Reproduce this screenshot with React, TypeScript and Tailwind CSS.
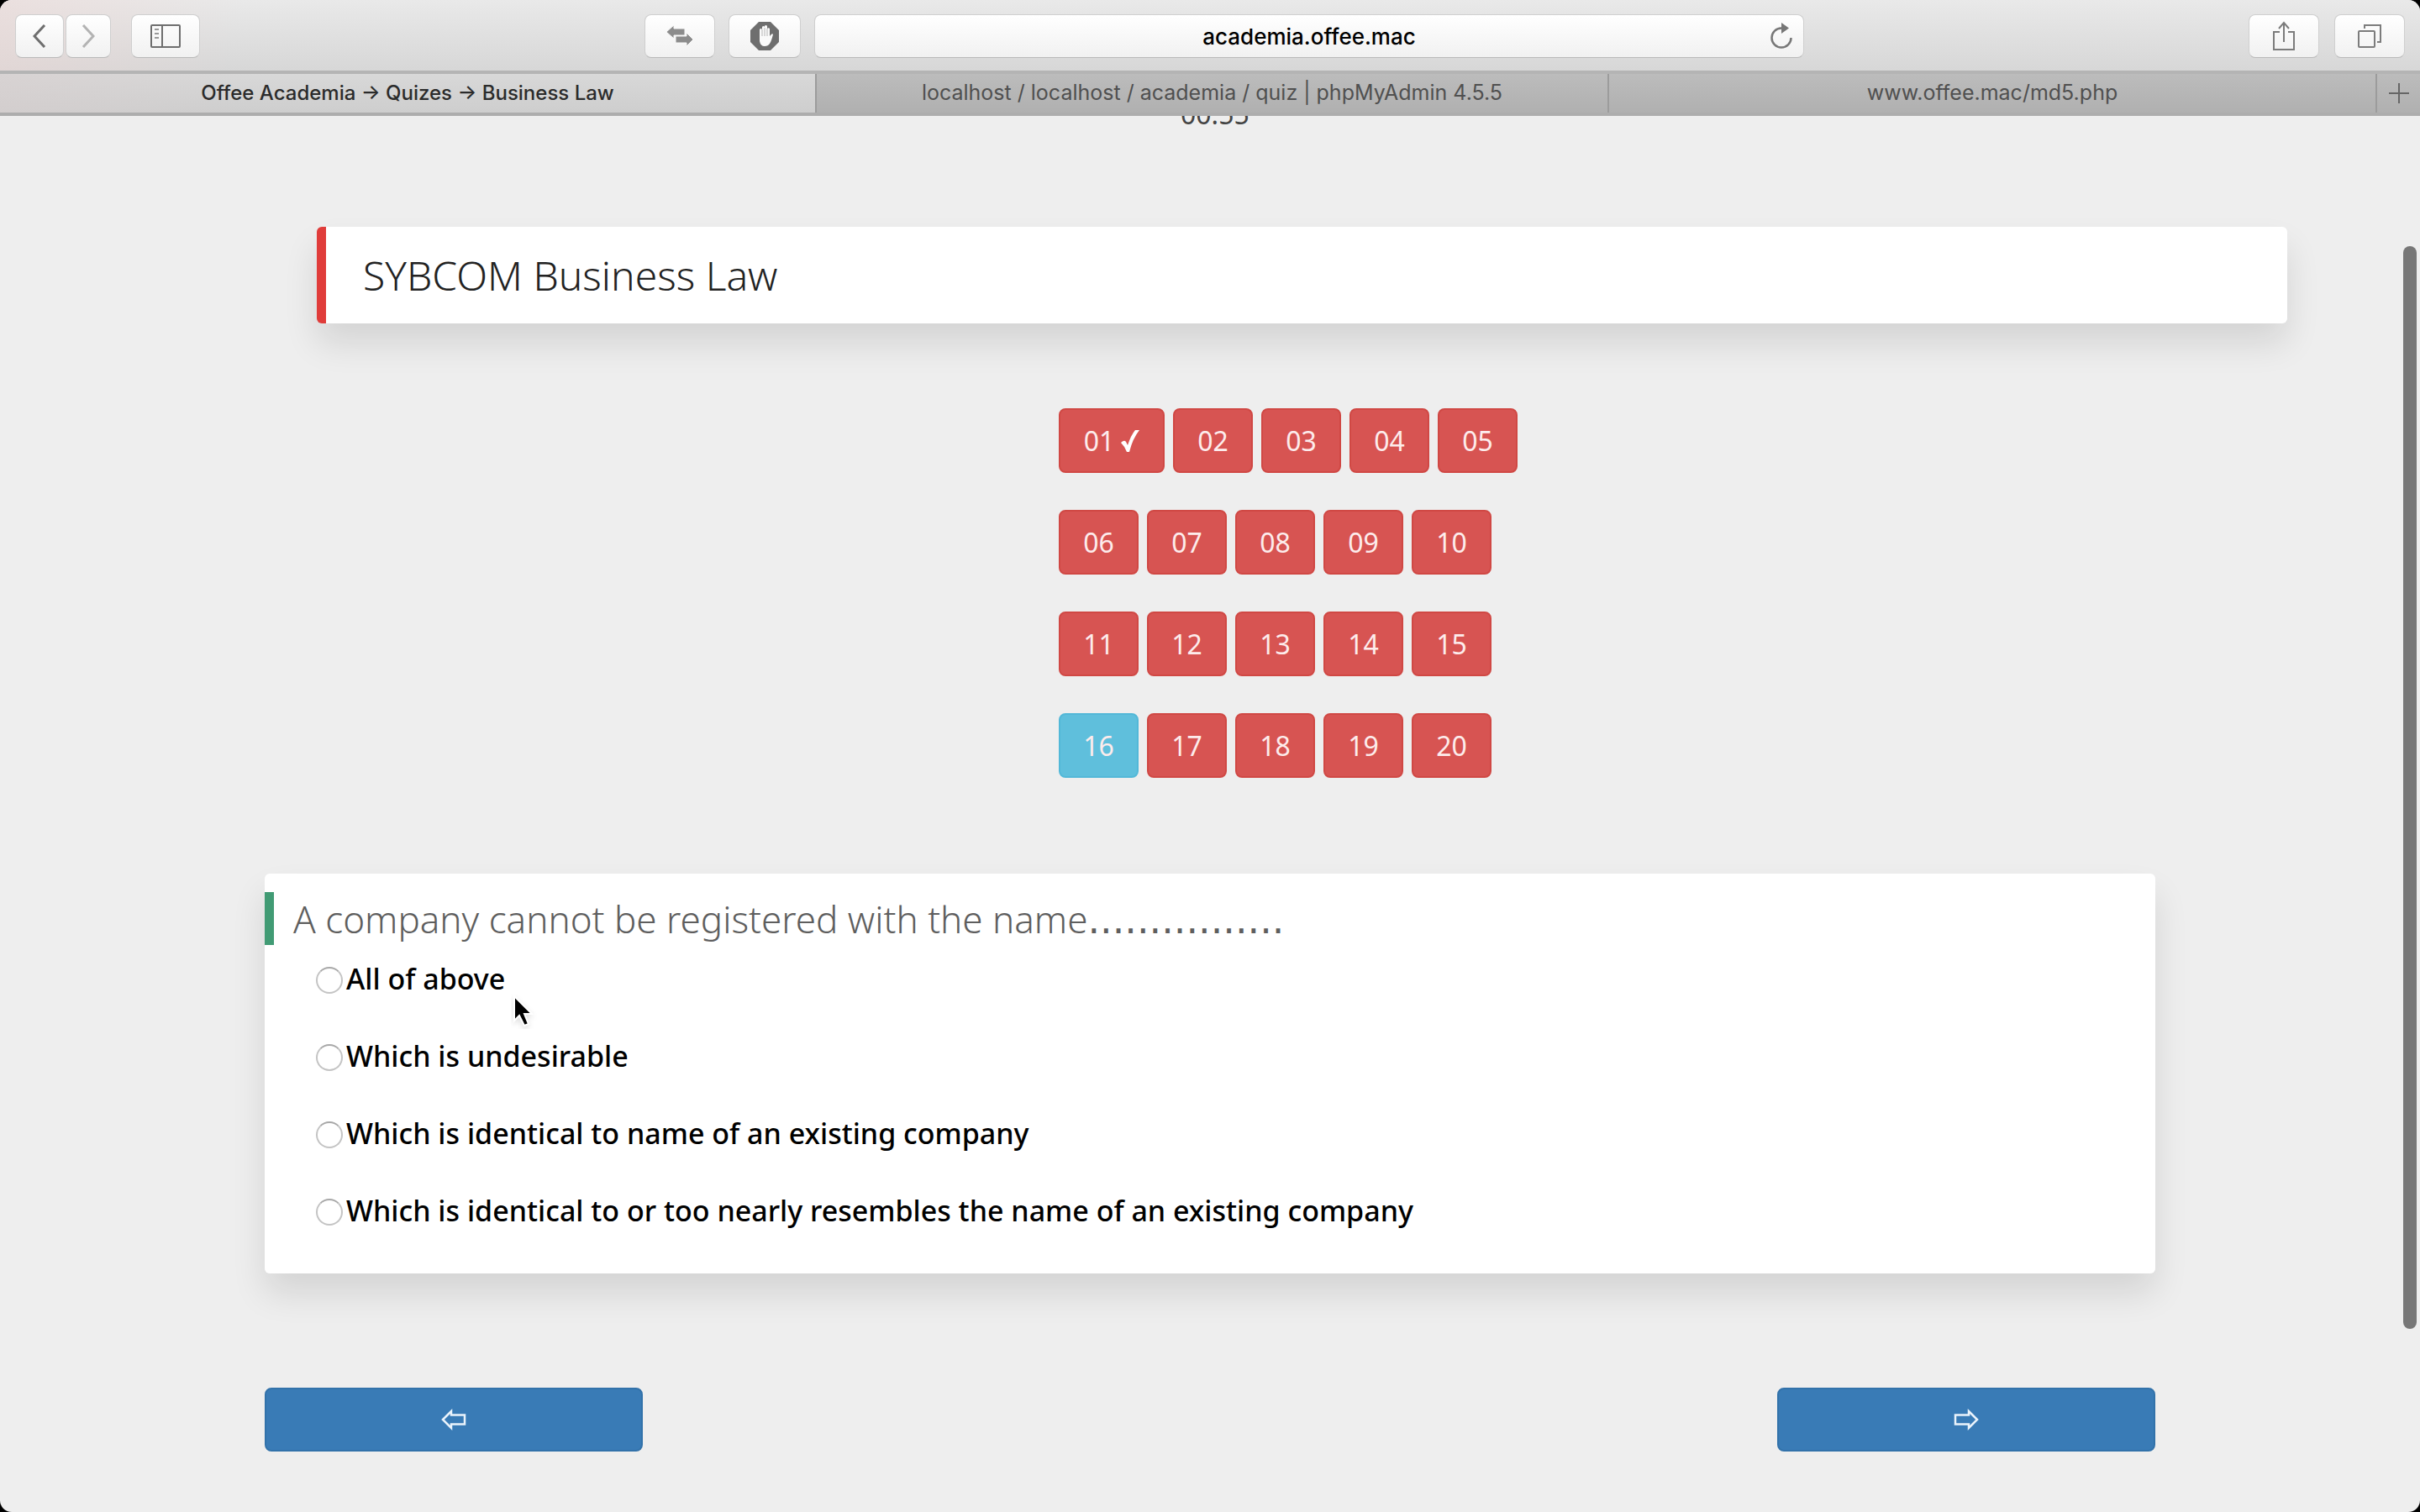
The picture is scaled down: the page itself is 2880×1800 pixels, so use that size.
import React from "react";

const chromeButton =
  "flex h-[52px] items-center justify-center rounded-lg border border-[#cfcfcf] border-b-[#b9b9b9] bg-linear-to-b from-white to-[#f1f1f1] text-[#6e6e6e]";

function BackIcon() {
  return (
    <svg width="16" height="28" viewBox="0 0 16 28" fill="none" stroke="currentColor" strokeWidth="3">
      <path d="M14 1 2 14l12 13" />
    </svg>
  );
}

function ForwardIcon() {
  return (
    <svg width="16" height="28" viewBox="0 0 16 28" fill="none" stroke="#b3b3b3" strokeWidth="3">
      <path d="m2 1 12 13L2 27" />
    </svg>
  );
}

function SidebarIcon() {
  return (
    <svg width="36" height="28" viewBox="0 0 36 28" fill="none" stroke="currentColor" strokeWidth="2">
      <rect x="1" y="1" width="34" height="26" rx="1" />
      <path d="M14 1v26" />
      <path d="M5 6h5M5 11h5M5 16h5" stroke="#999" />
    </svg>
  );
}

function SwapIcon() {
  return (
    <svg width="32" height="26" viewBox="0 0 32 26" fill="#8c8c8c">
      <path d="M0 8 9 0v4h13v8H9v4zM32 17l-8-8v4H11v8h13v4z" stroke="#f8f8f8" strokeWidth="1" />
    </svg>
  );
}

function BlockIcon() {
  return (
    <svg width="36" height="36" viewBox="0 0 36 36">
      <path d="M11 1h14l10 10v14L25 35H11L1 25V11z" fill="#6e6e6e" />
      <path
        d="M12 19V10q1.5-2 3 0V7q1.5-2 3 0V6q1.5-2 3 0v3q1.5-1.5 3 0v9q3-4 4-2-2 8-4 11-2 3-6 3-5 0-6-6z"
        fill="#fafafa"
      />
      <path d="M15 10v8M18 8v10M21 9v9" stroke="#8a8a8a" strokeWidth=".6" />
    </svg>
  );
}

function ReloadIcon() {
  return (
    <svg width="28" height="32" viewBox="0 0 28 32" fill="none" stroke="#777" strokeWidth="2.5">
      <path d="M14 6.5a11.5 11.5 0 1 0 11.5 11.5" />
      <path d="M14 0v13l9-6.5z" fill="#777" stroke="none" />
    </svg>
  );
}

function ShareIcon() {
  return (
    <svg width="28" height="36" viewBox="0 0 28 36" fill="none" stroke="#7c7c7c" strokeWidth="2">
      <path d="M9 13H2v21h24V13h-7M14 25V2M8 9l6-7 6 7" />
    </svg>
  );
}

function TabsIcon() {
  return (
    <svg width="28" height="28" viewBox="0 0 28 28" fill="none" stroke="#7c7c7c" strokeWidth="2">
      <rect x="1" y="8" width="19" height="19" rx="1" />
      <path d="M8 5V1h19v20h-4" />
    </svg>
  );
}

function ArrowIcon({ flip = false }: { flip?: boolean }) {
  return (
    <svg
      width="30"
      height="26"
      viewBox="0 0 30 26"
      fill="none"
      stroke="#eaf3fb"
      strokeWidth="2.5"
      className={flip ? "-scale-x-100" : ""}
    >
      <path d="M2 13 12 3v4.5h16v11H12V23z" />
    </svg>
  );
}

function Toolbar() {
  return (
    <header className="flex h-[84px] items-start justify-between bg-[linear-gradient(100deg,rgba(236,214,212,0.5),transparent_10%),linear-gradient(#e9e9e9,#d7d7d7)] px-[18px] pt-[17px]">
      <div className="flex">
        <button aria-label="Back" className={`${chromeButton} w-[58px]`}><BackIcon /></button>
        <button aria-label="Forward" className={`${chromeButton} ml-0.5 w-[54px]`}><ForwardIcon /></button>
        <button aria-label="Sidebar" className={`${chromeButton} ml-6 w-[82px]`}><SidebarIcon /></button>
      </div>
      <div className="flex w-[48.5%] gap-4">
        <button aria-label="Swap" className={`${chromeButton} w-[84px]`}><SwapIcon /></button>
        <button aria-label="Block content" className={`${chromeButton} w-[86px]`}><BlockIcon /></button>
        <div className="flex h-[52px] flex-1 items-center rounded-lg border border-[#cfcfcf] border-b-[#b9b9b9] bg-linear-to-b from-white to-[#f1f1f1] pr-3">
          <input
            aria-label="Address"
            defaultValue="academia.offee.mac"
            className="min-w-0 flex-1 bg-transparent pl-10 text-center text-[26px] font-medium text-black outline-none"
          />
          <button aria-label="Reload"><ReloadIcon /></button>
        </div>
      </div>
      <div className="flex gap-[18px]">
        <button aria-label="Share" className={`${chromeButton} w-[84px]`}><ShareIcon /></button>
        <button aria-label="Show tabs" className={`${chromeButton} w-[84px]`}><TabsIcon /></button>
      </div>
    </header>
  );
}

function TabStrip() {
  const idle =
    "flex items-center justify-center border-l-2 border-[#9c9c9c] bg-linear-to-b from-[#bcbcbc] to-[#b0b0b0] text-[#505050]";
  return (
    <nav className="grid h-[54px] grid-cols-[970fr_943fr_914fr_53px] border-y-4 border-t-[#b4b4b4] border-b-[#adadad] text-[25px]">
      <a
        href="#quiz"
        className="flex items-center justify-center bg-[linear-gradient(100deg,rgba(216,206,206,0.5),transparent_30%),linear-gradient(#d8d8d8,#cecece)] text-[24px] font-medium text-[#2b2b2b]"
      >
        Offee Academia → Quizes → Business Law
      </a>
      <a href="#phpmyadmin" className={idle}>localhost / localhost / academia / quiz | phpMyAdmin 4.5.5</a>
      <a href="#md5" className={idle}>www.offee.mac/md5.php</a>
      <button aria-label="New tab" className={idle}>
        <svg width="24" height="24" viewBox="0 0 24 24" stroke="#666" strokeWidth="2">
          <path d="M12 0v24M0 12h24" />
        </svg>
      </button>
    </nav>
  );
}

const questionRows = [
  ["01", "02", "03", "04", "05"],
  ["06", "07", "08", "09", "10"],
  ["11", "12", "13", "14", "15"],
  ["16", "17", "18", "19", "20"],
];

function QuestionButton({ label }: { label: string }) {
  const tone = label === "16" ? "border-[#52b8d8] bg-[#5fbfdc]" : "border-[#d04844] bg-[#d75452]";
  const answered = label === "01";
  return (
    <button
      className={`flex h-[77px] items-center justify-center gap-2 rounded-lg border-2 text-[32px] text-[#fdecec] ${tone} ${answered ? "w-[126px]" : "w-[95px]"}`}
    >
      {label}
      {answered && (
        <svg width="22" height="26" viewBox="0 0 22 26" fill="white">
          <path d="M0 15q4-4 6-1l2 4Q12 6 17 0h5Q14 10 10 26H7Q5 20 0 15z" />
        </svg>
      )}
    </button>
  );
}

const options = [
  "All of above",
  "Which is undesirable",
  "Which is identical to name of an existing company",
  "Which is identical to or too nearly resembles the name of an existing company",
];

const cardShadow = "shadow-[0_24px_40px_rgba(0,0,0,0.11)]";

export default function App() {
  return (
    <div className="min-h-screen bg-black">
      <div className="relative flex min-h-screen flex-col overflow-hidden rounded-[14px] bg-[#eeeeee] font-[Inter,sans-serif]">
        <Toolbar />
        <TabStrip />
        <main className="font-['Noto_Sans',sans-serif]">
          <div className="h-[132px] overflow-hidden pl-[1405px]">
            <p className="-mt-[26px] text-[32px] leading-[48px] text-[#444]">00:55</p>
          </div>
          <h1
            className={`mr-[158px] ml-[377px] flex h-[115px] items-center rounded-md border-l-[11px] border-[#e03c3a] bg-white pl-11 text-[48px] font-light text-[#222] ${cardShadow}`}
          >
            SYBCOM Business Law
          </h1>
          <div className="mt-[101px] ml-[1260px] flex flex-col gap-11">
            {questionRows.map((row) => (
              <div key={row[0]} className="flex gap-2.5">
                {row.map((label) => (
                  <QuestionButton key={label} label={label} />
                ))}
              </div>
            ))}
          </div>
          <div className="mt-[114px] mr-[315px] ml-[315px]">
            <fieldset className={`rounded-md bg-white pt-[22px] pb-[51px] ${cardShadow}`}>
              <h2 className="flex h-[63px] items-center border-l-[11px] border-[#419b74] pl-[23px] text-[44px] font-light text-[#5e5e5e]">
                <span>
                  A company cannot be registered with the name
                  <span className="font-['DejaVu_Sans',sans-serif] text-[46px] leading-none font-normal">................</span>
                </span>
              </h2>
              <div className="relative mt-4 ml-[61px] flex flex-col gap-11">
                {options.map((option) => (
                  <label key={option} className="flex h-12 items-center gap-1 text-[34px] font-medium text-black">
                    <input
                      type="radio"
                      name="answer"
                      className="mt-1 size-8 appearance-none rounded-full border-2 border-[#c4c4c4] border-t-[#a8a8a8] bg-white"
                    />
                    {option}
                  </label>
                ))}
                <svg className="absolute top-[42px] left-[232px]" width="32" height="42" viewBox="0 0 32 42">
                  <path
                    d="M4 3v29l6-6 6 12 5-2-5-12h9z"
                    fill="black"
                    stroke="white"
                    strokeWidth="2"
                    className="drop-shadow-md"
                  />
                </svg>
              </div>
            </fieldset>
            <div className="mt-[136px] flex justify-between">
              <button aria-label="Previous question" className="flex h-[76px] w-1/5 items-center justify-center rounded-lg border-2 border-[#3272aa] bg-[#397bb6]">
                <ArrowIcon />
              </button>
              <button aria-label="Next question" className="flex h-[76px] w-1/5 items-center justify-center rounded-lg border-2 border-[#3272aa] bg-[#397bb6]">
                <ArrowIcon flip />
              </button>
            </div>
          </div>
        </main>
        <div className="absolute top-[293px] right-1 h-[1289px] w-4 rounded-full bg-[#777]" />
      </div>
    </div>
  );
}
